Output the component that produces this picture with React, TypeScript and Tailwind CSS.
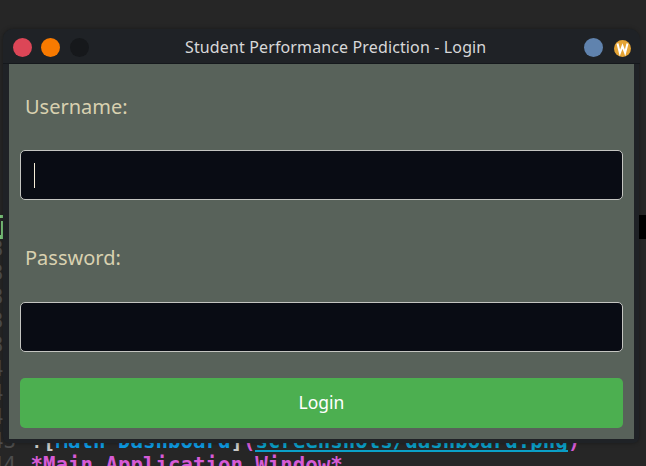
const rows = [35, 36, 37, 38, 39, 40, 41, 42];

function Editor() {
  return (
    <div className="h-[466px] w-[646px] overflow-hidden bg-[#262626] pt-[215px] font-['DejaVu_Sans_Mono',monospace] text-[20.75px] leading-[24px] whitespace-pre text-[#4d4d4d]">
      <div className="flex h-6 justify-between">
        <div className="h-6 w-3 border-t-[3px] border-b-[4px] border-[#7cc67c] pt-[3px]">
          <div className="h-[14px] w-[3px] border-r-2 border-[#7cc67c]" />
        </div>
        <div className="w-[8px] bg-black" />
      </div>
      <div className="-mt-[2px] -ml-[9px]">
        {rows.map((n) => (
          <div key={n} className="h-6">{n}</div>
        ))}
        <div className="flex h-6">
          <span className="w-[39.5px]">43</span>
          <span className="font-bold text-[#c8c8c8]">![</span>
          <span className="font-bold text-[#0d99e0]">Math Dashboard</span>
          <span className="font-bold text-[#c8c8c8]">]</span>
          <span className="font-bold text-[#d65bd6]">(</span>
          <span className="h-[23px] border-b-2 border-[#0aa0c8] font-bold text-[#0a9cc4]">screenshots/dashboard.png</span>
          <span className="font-bold text-[#d65bd6]">)</span>
        </div>
        <div className="flex h-6">
          <span className="w-[39.5px]">44</span>
          <span className="font-bold text-[#d65bd6]">*Main Application Window*</span>
        </div>
      </div>
    </div>
  );
}

function TitleBar() {
  return (
    <div className="-mr-[6px] -ml-[6px] flex h-[35px] items-center rounded-t-[10px] border-b border-[#15181c] bg-[#1f2226] pt-[2px] pr-[9px] pl-[9.5px]">
      <div className="flex w-[76px] gap-[9.5px]">
        <span className="size-[19px] rounded-full bg-[#dc4657]" />
        <span className="size-[19px] rounded-full bg-[#f87a00]" />
        <span className="size-[19px] rounded-full bg-[#16181b]" />
      </div>
      <div className="flex-1 pl-[96.5px] text-[16px] tracking-[0.13px] whitespace-nowrap text-[#d8d8d9]">Student Performance Prediction - Login</div>
      <div className="flex items-center gap-[11px]">
        <span className="size-[19px] rounded-full bg-[#6083ae]" />
        <svg className="mt-[2px] size-[17px]" viewBox="0 0 17 17">
          <circle cx="8.5" cy="8.5" r="8.5" fill="#e4a334" />
          <path d="M3.5 3.5 5.9 13 8.5 6 11.1 13 13.5 3.5" fill="none" stroke="#fff" strokeWidth="2" />
        </svg>
      </div>
    </div>
  );
}

export default function App() {
  return (
    <div className="relative">
      <Editor />
      <div className="absolute top-[29px] left-[3px] h-[414px] w-[636px] rounded-t-[10px] rounded-b-[6px] bg-[#1f2226] pr-[5px] pl-[6px] font-['Noto_Sans',sans-serif] shadow-[0_0_4px_#00000059]">
        <TitleBar />
        <div className="h-[375px] bg-[#58625a] px-[11px] pt-[27px]">
          <label className="block h-[59px] pl-[5px] text-[20px] leading-8 text-[#d9d1b0]">Username:</label>
          <div className="flex h-[50px] items-center rounded-[5px] border border-[#c4c5c1] bg-[#090c14] pl-[13px]">
            <span className="h-[25px] w-px bg-[#f5edd8]" />
          </div>
          <label className="mt-[42px] block h-[60px] pl-[5px] text-[20px] leading-8 text-[#d9d1b0]">Password:</label>
          <div className="h-[50px] rounded-[5px] border border-[#c4c5c1] bg-[#090c14]" />
          <button className="mt-[26px] block h-[50px] w-full rounded-[5px] bg-[#4caf50] pb-px text-[17.5px] text-white">Login</button>
        </div>
      </div>
    </div>
  );
}
